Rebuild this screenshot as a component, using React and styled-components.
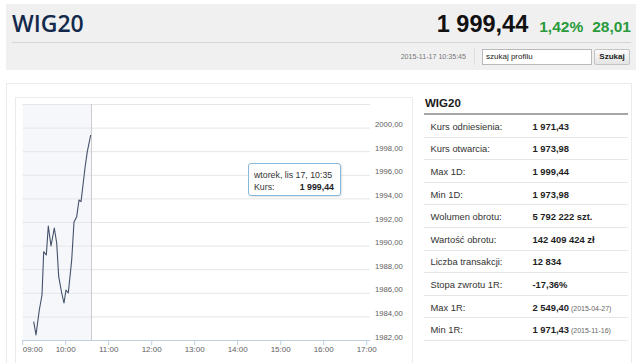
import React from 'react';
import styled, { createGlobalStyle } from 'styled-components';

const GlobalStyle = createGlobalStyle`
    html, body {
        margin: 0;
        padding: 0;
        overflow: hidden;
        background: #fff;
        font-family: "Liberation Sans", Arial, sans-serif;
    }
`;

const Page = styled.div`
    width: 640px;
    height: 363px;
    padding: 4px 0 0 6px;
    box-sizing: border-box;
`;

const Header = styled.div`
    width: 630px;
    height: 66px;
    background: #f0f0f0;
    display: flex;
    flex-direction: column;
`;

const TopRow = styled.div`
    height: 38px;
    margin: 0 5px 0 6px;
    border-bottom: 1px solid #d6d6d6;
    display: flex;
    align-items: center;
    justify-content: space-between;
`;

const Title = styled.h1`
    margin: 0;
    font-family: "Open Sans", sans-serif;
    font-weight: 600;
    font-size: 23px;
    color: #13294b;
`;

const Quote = styled.div`
    display: flex;
    align-items: baseline;
    padding-top: 2px;
`;

const Price = styled.span`
    font-size: 23.5px;
    font-weight: bold;
    color: #111;
    margin-right: 11px;
`;

const Change = styled.span`
    font-size: 15.5px;
    font-weight: bold;
    color: #2a9b3c;
    margin-left: ${props => props.gap || '0'};
`;

const ToolRow = styled.div`
    flex: 1;
    display: flex;
    align-items: center;
    justify-content: flex-end;
    padding-right: 6px;
`;

const Stamp = styled.span`
    font-size: 7.1px;
    color: #777;
    margin-right: 8px;
`;

const Divider = styled.span`
    width: 1px;
    height: 17px;
    background: #dcdcdc;
    margin-right: 7px;
`;

const SearchInput = styled.input`
    width: 110px;
    height: 16px;
    box-sizing: border-box;
    border: 1px solid #b9b9b9;
    background: #fff;
    padding: 0 3px;
    font-family: "Liberation Sans", Arial, sans-serif;
    font-size: 8px;
    color: #222;
    outline: none;
`;

const SearchButton = styled.button`
    width: 36px;
    height: 16px;
    margin-left: 2px;
    padding: 0;
    box-sizing: border-box;
    border: 1px solid #c4c4c4;
    border-radius: 2px;
    background: linear-gradient(#fafafa, #e4e4e4);
    font-family: "Liberation Sans", Arial, sans-serif;
    font-size: 8px;
    font-weight: bold;
    color: #222;
`;

const Board = styled.div`
    margin-top: 13px;
    width: 626px;
    height: 280px;
    box-sizing: border-box;
    border: 1px solid #ebebeb;
    border-bottom: none;
    padding: 13px 3px 0 8px;
    display: flex;
    overflow: hidden;
`;

const ChartBox = styled.div`
    position: relative;
    width: 398px;
    height: 266px;
    box-sizing: border-box;
    border: 1px solid #ebebeb;
    border-bottom: none;
    flex-shrink: 0;

    svg {
        display: block;
    }
`;

const Tooltip = styled.div`
    position: absolute;
    left: 232px;
    top: 65px;
    width: 93px;
    height: 33px;
    box-sizing: border-box;
    border: 1px solid #86b8dc;
    border-radius: 3px;
    background: rgba(255, 255, 255, 0.92);
    box-shadow: 1px 1px 2px rgba(0, 0, 0, 0.12);
    padding: 5px 6px 0 5px;
    font-size: 8.8px;
    color: #333;
`;

const TipLine = styled.div`
    display: flex;
    justify-content: space-between;
    line-height: 12px;

    b {
        color: #222;
    }
`;

const Profile = styled.div`
    margin-left: 11px;
    width: 204px;
`;

const ProfileTitle = styled.div`
    height: 18px;
    line-height: 13px;
    box-sizing: border-box;
    padding-left: 1px;
    font-size: 11.5px;
    font-weight: bold;
    color: #1a1a1a;
    border-bottom: 2px solid #a6a6a6;
`;

const StatRow = styled.div`
    display: grid;
    grid-template-columns: 102px 1fr;
    align-items: center;
    height: 22.6px;
    box-sizing: border-box;
    padding-left: 6.5px;
    padding-top: 1px;
    border-bottom: 1px solid #e6e6e6;
    font-size: 9.4px;
`;

const StatLabel = styled.span`
    color: #333;
`;

const StatValue = styled.span`
    font-weight: bold;
    color: #1e1e1e;

    small {
        font-weight: normal;
        font-size: 7px;
        color: #666;
    }
`;

const stats = [
    ['Kurs odniesienia:', '1 971,43'],
    ['Kurs otwarcia:', '1 973,98'],
    ['Max 1D:', '1 999,44'],
    ['Min 1D:', '1 973,98'],
    ['Wolumen obrotu:', '5 792 222 szt.'],
    ['Wartość obrotu:', '142 409 424 zł'],
    ['Liczba transakcji:', '12 834'],
    ['Stopa zwrotu 1R:', '-17,36%'],
    ['Max 1R:', '2 549,40', '(2015-04-27)'],
    ['Min 1R:', '1 971,43', '(2015-11-16)'],
];

// page coordinates of the intraday line (09:00 - 10:35)
const points = [
    [33.7, 321.7], [36, 335], [39.3, 310], [42, 295], [43.7, 251.7],
    [46.3, 255], [48.3, 226], [51, 246], [54.3, 228], [56.7, 243],
    [58.7, 276.7], [61.7, 293], [64, 303], [66, 290], [68.3, 293],
    [71.7, 260], [74, 222], [76.7, 216.7], [79, 200], [81, 201.7],
    [85, 168], [87.3, 151.7], [90.7, 135],
];

const PLOT_LEFT = 22.7;
const PLOT_RIGHT = 370;
const PLOT_TOP = 104;
const STEP_Y = 23.6;
const STEP_X = 43;
const hours = ['09:00', '10:00', '11:00', '12:00', '13:00', '14:00', '15:00', '16:00', '17:00'];
const labelFont = 'Liberation Sans, Arial, sans-serif';

const Chart = () => {
    const grid = Array.from({ length: 11 }, (_, i) => PLOT_TOP + i * STEP_Y);
    const bottom = grid[10];
    const line = points.map(p => p.join(',')).join(' ');

    return (
        <svg width="396" height="265" viewBox="16 98 396 265">
            <rect x={PLOT_LEFT} y={PLOT_TOP} width={91 - PLOT_LEFT} height={bottom - PLOT_TOP} fill="#f5f7fa" />
            {grid.slice(0, 10).map((y, i) => (
                <g key={y}>
                    <line x1={PLOT_LEFT} x2={PLOT_RIGHT} y1={y + 0.5} y2={y + 0.5} stroke="#e6e6e6" />
                    {i > 0 && (
                        <text x="375" y={y - 0.5} fontSize="7.7" fill="#606060" fontFamily={labelFont}>
                            {(2002 - i * 2) + ',00'}
                        </text>
                    )}
                </g>
            ))}
            <text x="375" y={bottom - 0.5} fontSize="7.7" fill="#606060" fontFamily={labelFont}>1982,00</text>
            <line x1="91.5" x2="91.5" y1={PLOT_TOP} y2={bottom} stroke="#cccccc" />
            <line x1={PLOT_LEFT} x2={PLOT_RIGHT} y1={bottom + 0.5} y2={bottom + 0.5} stroke="#c0d0e0" />
            {hours.map((h, i) => {
                const x = PLOT_LEFT + i * STEP_X;
                return (
                    <g key={h}>
                        <line x1={x} x2={x} y1={bottom} y2={bottom + 5} stroke="#c0d0e0" />
                        <text x={x} y="351.5" fontSize="8" fill="#606060"
                            textAnchor={i === 0 ? 'start' : 'middle'} fontFamily={labelFont}>
                            {h}
                        </text>
                    </g>
                );
            })}
            <polyline points={line} fill="none" stroke="#44506a" strokeWidth="1.1" strokeLinejoin="round" />
        </svg>
    );
};

const App = () => (
    <Page>
        <GlobalStyle />
        <Header>
            <TopRow>
                <Title>WIG20</Title>
                <Quote>
                    <Price>1 999,44</Price>
                    <Change>1,42%</Change>
                    <Change gap="9px">28,01</Change>
                </Quote>
            </TopRow>
            <ToolRow>
                <Stamp>2015-11-17 10:35:45</Stamp>
                <Divider />
                <SearchInput defaultValue="szukaj profilu" />
                <SearchButton>Szukaj</SearchButton>
            </ToolRow>
        </Header>
        <Board>
            <ChartBox>
                <Chart />
                <Tooltip>
                    <TipLine>wtorek, lis 17, 10:35</TipLine>
                    <TipLine><span>Kurs:</span><b>1 999,44</b></TipLine>
                </Tooltip>
            </ChartBox>
            <Profile>
                <ProfileTitle>WIG20</ProfileTitle>
                {stats.map(([label, value, date]) => (
                    <StatRow key={label}>
                        <StatLabel>{label}</StatLabel>
                        <StatValue>{value}{date && <small> {date}</small>}</StatValue>
                    </StatRow>
                ))}
            </Profile>
        </Board>
    </Page>
);

export default App;
